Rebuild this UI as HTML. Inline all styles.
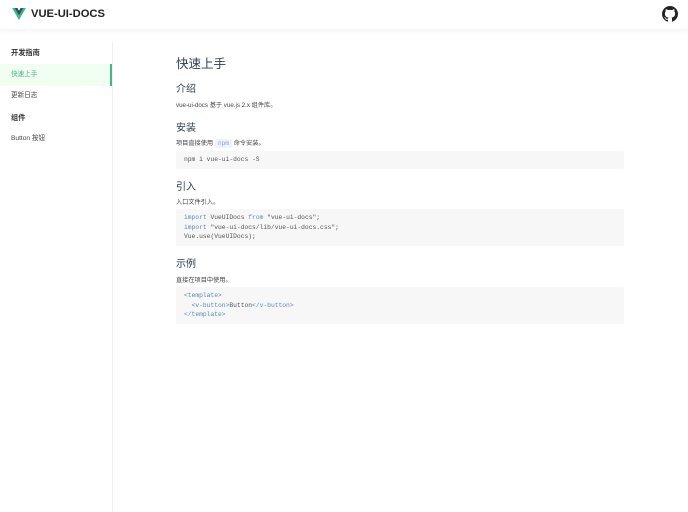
<!DOCTYPE html>
<html><head><meta charset="utf-8"><style>
*{margin:0;padding:0;box-sizing:border-box}
body{width:688px;height:512px;background:#fff;font-family:"Liberation Sans","Noto Sans CJK SC",sans-serif;color:#2c3e50;position:relative;overflow:hidden}
.hd{position:absolute;left:0;top:0;width:688px;height:30px;background:#fff;box-shadow:0 2px 4px rgba(0,0,0,.04);border-bottom:1px solid #f6f6f6}
.logo{position:absolute;left:12px;top:8px}
.title{position:absolute;left:31px;top:8px;font-size:11.2px;font-weight:bold;color:#222}
.gh{position:absolute;left:662px;top:6px}
.sb{position:absolute;left:0;top:42px;width:113px;height:470px;border-right:1px solid #eee}
.g{position:absolute;left:11px;font-size:7.2px;font-weight:bold;color:#333}
.it{position:absolute;left:0;width:112px;height:22px;font-size:6.6px;line-height:22px;padding-left:11px;color:#444}
.act{background:#f0fff0;color:#42b983;border-right:2px solid #42b983;width:112px}
.ct{position:absolute;left:176px;top:0;width:448px}
h1{position:absolute;top:53px;font-size:12.5px;font-weight:normal;color:#2c3e50}
h2{position:absolute;font-size:10px;font-weight:normal;color:#2c3e50}
p{position:absolute;font-size:6.2px;color:#444}
.c{font-family:"Liberation Mono",monospace;font-size:6.2px;background:#eef4fa;color:#90a4b8;padding:1px 3px;border-radius:2px}
pre{position:absolute;left:0;width:448px;background:#f7f7f7;border-radius:2px;font-family:"Liberation Mono",monospace;font-size:6.3px;line-height:9.5px;color:#555;padding:4px 8px}
.k{color:#5b89b5}
</style></head><body>
<div class="hd">
<svg class="logo" width="14" height="12" viewBox="0 0 261 226"><path fill="#41b883" d="M161 0 130.5 53 100 0H0l130.5 226L261 0z"/><path fill="#34495e" d="M161 0 130.5 53 100 0H52l78.5 136L209 0z"/></svg>
<div class="title">VUE-UI-DOCS</div>
<svg class="gh" width="16" height="16" viewBox="0 0 16 16"><path fill="#222" d="M8 0C3.580 0 0 3.58 0 8c0 3.54 2.29 6.53 5.47 7.590.4.07.55-.17.55-.38 0-.19-.01-.82-.01-1.49-2.010.37-2.53-.49-2.69-.94-.09-.23-.48-.94-.82-1.13-.28-.15-.68-.52-.01-.53.63-.01 1.080.58 1.230.82.72 1.210 1.870.87 2.330.66.07-.52.28-.87.51-1.07-1.78-.2-3.64-.89-3.64-3.95 0-.87.31-1.59.82-2.15-.08-.2-.36-1.020.08-2.12 0 0 .67-.21 2.2.82.64-.18 1.32-.27 2-.27.68 0 1.360.09 2 .27 1.53-1.04 2.2-.82 2.2-.82.44 1.1.16 1.920.08 2.12.51.56.82 1.270.82 2.15 0 3.07-1.87 3.75-3.65 3.950.29.25.54.73.54 1.48 0 1.07-.01 1.93-.01 2.2 0 .21.15.46.55.38A8.013 8.013 0 0016 8c0-4.42-3.58-8-8-8z"/></svg>
</div>
<div class="sb"></div>
<div class="g" style="top:48px">开发指南</div>
<div class="it act" style="top:64px">快速上手</div>
<div class="it" style="top:85px">更新日志</div>
<div class="g" style="top:113px">组件</div>
<div class="it" style="top:128px">Button 按钮</div>
<div class="ct">
<h1>快速上手</h1>
<h2 style="top:80px">介绍</h2>
<p style="top:100px">vue-ui-docs 基于 vue.js 2.x 组件库。</p>
<h2 style="top:119px">安装</h2>
<p style="top:138px">项目直接使用 <span class="c">npm</span> 命令安装。</p>
<pre style="top:151px;height:18px">npm i vue-ui-docs -S</pre>
<h2 style="top:178px">引入</h2>
<p style="top:197px">入口文件引入。</p>
<pre style="top:209px;height:37px"><span class="k">import</span> VueUIDocs <span class="k">from</span> "vue-ui-docs";
<span class="k">import</span> "vue-ui-docs/lib/vue-ui-docs.css";
Vue.use(VueUIDocs);</pre>
<h2 style="top:255px">示例</h2>
<p style="top:275px">直接在项目中使用。</p>
<pre style="top:287px;height:37px"><span class="k">&lt;template&gt;</span>
  <span class="k">&lt;v-button&gt;</span>Button<span class="k">&lt;/v-button&gt;</span>
<span class="k">&lt;/template&gt;</span></pre>
</div>
</body></html>
